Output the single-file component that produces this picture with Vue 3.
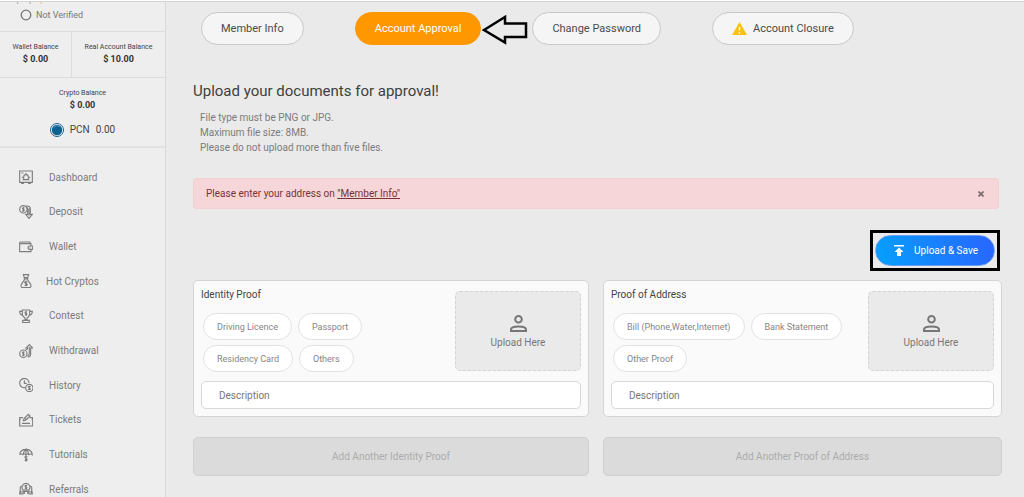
<script setup>
import { ref } from 'vue'

const menu = [
  { name: 'Dashboard', icon: 'dashboard' },
  { name: 'Deposit', icon: 'deposit' },
  { name: 'Wallet', icon: 'wallet' },
  { name: 'Hot Cryptos', icon: 'bag' },
  { name: 'Contest', icon: 'trophy' },
  { name: 'Withdrawal', icon: 'withdrawal' },
  { name: 'History', icon: 'history' },
  { name: 'Tickets', icon: 'tickets' },
  { name: 'Tutorials', icon: 'umbrella' },
  { name: 'Referrals', icon: 'referrals' },
]

const icons = {
  dashboard: [
    'M1 1.500H20V18.500H1ZM4 18.500V20.500H6.500V18.500M14.500 18.500V20.500H17V18.500M3.500 4.500H6.500M5.500 14.500H15.500M7 14.500V11Q7 7 10.500 7Q14 7 14 11V14.500M10.500 7V4.500M5 10V12M16 10V12',
  ],
  deposit: [
    'M6.500 1A5.500 5.500 0 1 0 6.500 12A5.500 5.500 0 1 0 6.500 1',
    'M8.500 4.500Q7 3.500 5.700 4.300T6.500 6.500T7.500 8.600T4.500 8.500M6.500 3V10',
    'M10.500 1.500Q17 1 17 6V14H20L15 20L10 14H13V7Q13 4 11.500 3M15 5V16',
  ],
  wallet: [
    'M1 4.500V17.500H18V14M18 9V5.500H3Q1 5.500 1 4.200T3 3H16.500V5.500M20.500 9H16Q13.500 9 13.500 11.500T16 14H20.500ZM16 11.500H17',
  ],
  bag: [
    'M6.500 1H14.500L13 5.500H8ZM7.500 7.500H13.500M8 5.500V9L3.500 15.500Q2 20.500 6 20.500H15Q19 20.500 17.500 15.500L13 9V5.500',
    'M12.500 12Q10.500 10.800 9 12T10.500 14.300T12 16.800T8.500 16.500M10.500 10V18.500',
  ],
  trophy: [
    'M5 1.500H16V8Q15 12.500 12 13.500V16H9V13.500Q6 12.500 5 8ZM5 3.500H1Q1 9 6 9.500M16 3.500H20Q20 9 15 9.500M5.500 20.500V17H15.500V20.500Z',
    'M12 4.500Q10 3.500 9.300 4.800T10.500 6.500T11.500 8.600T9 8.500M10.500 3V10',
  ],
  withdrawal: [
    'M6.500 9A5.500 5.500 0 1 0 6.500 20A5.500 5.500 0 1 0 6.500 9',
    'M8.500 12.500Q7 11.500 5.700 12.300T6.500 14.500T7.500 16.600T4.500 16.500M6.500 11V18',
    'M10 8.500Q13 8.500 13 6H10.500L15.500 1L20.500 6H17.500V15Q17.500 19.500 12.500 19.500M15.500 4V14Q15.500 17 13 17.500',
  ],
  history: [
    'M9 14.500A7 7 0 1 1 15 7.500M8 3.500V8H11.500',
    'M15.500 9.500A5.500 5.500 0 1 0 15.500 20.500A5.500 5.500 0 1 0 15.500 9.500',
    'M17.500 13Q16 12 14.700 12.800T15.500 15T16.500 17.200T13.500 17M15.500 11.500V18.500',
  ],
  tickets: [
    'M6 7H1V19.500H20.500V7H16M1 10H2.500M19 10H20.500M4.500 15.500H16.500M6 12L8 8L14 2L16.500 4.500L10.500 10.500L6 12M9 8L11 10',
  ],
  umbrella: [
    'M1 10Q2 2 10.500 2T20 10Q17 8 14.500 10Q12.500 8 10.500 10Q8.500 8 6 10Q3.500 8 1 10M6.500 10Q7 4 10.500 2Q14 4 14.500 10M10.500 0.500V11',
    'M12.500 13Q10.500 12 9.300 13T10.500 15.500T12 18.300T8.500 18M10.500 11V20.500',
  ],
  referrals: [
    'M10.500 2A6 6 0 0 1 15 12H6A6 6 0 0 1 10.500 2M5 6Q1 6 2 11L1 18H6V13M16 6Q20 6 19 11L20 18H15V13M6 18V14H15V18M3 13V17M18 13V17M8 14V18M13 14V18',
    'M12 5.500Q10 4.500 9.300 5.800T10.500 7.500T11.500 9.600T9 9.500M10.500 4V11',
  ],
}

const tabs = ['Member Info', 'Account Approval', 'Change Password', 'Account Closure']
const activeTab = ref('Account Approval')

const proofs = ref([
  {
    id: 'identity',
    title: 'Identity Proof',
    rows: [['Driving Licence', 'Passport'], ['Residency Card', 'Others']],
    description: '',
  },
  {
    id: 'address',
    title: 'Proof of Address',
    rows: [['Bill (Phone,Water,Internet)', 'Bank Statement'], ['Other Proof']],
    description: '',
  },
])
const alertOpen = ref(true)
</script>

<template>
  <div class="page">
    <aside class="sidebar">
      <div class="status">
        <svg class="remnant" viewBox="0 0 30 2" aria-hidden="true">
          <path d="M1 0L2 2M14 0V2" stroke="#a5a5a5" />
          <path d="M25 0V2" stroke="#f3bd7c" />
        </svg>
        <svg class="ring" viewBox="0 0 12 12" aria-hidden="true">
          <circle cx="6" cy="6" r="4.800" fill="none" stroke="#777" stroke-width="1.300" />
        </svg>
        <span>Not Verified</span>
      </div>
      <div class="balances">
        <div class="balance">
          <span>Wallet Balance</span>
          <strong>$ 0.00</strong>
        </div>
        <div class="balance">
          <span>Real Account Balance</span>
          <strong>$ 10.00</strong>
        </div>
      </div>
      <div class="crypto">
        <div class="balance">
          <span>Crypto Balance</span>
          <strong>$ 0.00</strong>
        </div>
        <div class="coin">
          <svg viewBox="0 0 14 14" aria-hidden="true">
            <circle cx="7" cy="7" r="6.500" fill="#f2f6f8" stroke="#1d628c" />
            <circle cx="7" cy="7" r="5.200" fill="#0d608f" />
            <path d="M4 4.500A4 4 0 0 1 9.500 3.700" fill="none" stroke="#4d91b4" />
          </svg>
          <span>PCN</span>
          <span>0.00</span>
        </div>
      </div>
      <nav class="menu">
        <a v-for="item in menu" :key="item.name" href="#" :class="item.icon">
          <svg viewBox="0 0 21 21" aria-hidden="true">
            <path v-for="d in icons[item.icon]" :key="d" :d="d" />
          </svg>
          <span>{{ item.name }}</span>
        </a>
      </nav>
    </aside>

    <main class="content">
      <nav class="tabs">
        <div v-for="tab in tabs" :key="tab" class="tab-slot">
          <button type="button" class="tab" :class="{ active: tab === activeTab }" @click="activeTab = tab">
            <svg v-if="tab === 'Account Closure'" class="warning" viewBox="0 0 15 13" aria-hidden="true">
              <path d="M7.500 0L15 13H0Z" fill="#ffc012" />
              <path d="M7.500 5V8.500M7.500 10V11.500" stroke="#fff" stroke-width="1.400" />
            </svg>
            {{ tab }}
          </button>
          <svg v-if="tab === 'Account Approval'" class="pointer" viewBox="0 0 46 30" aria-hidden="true">
            <path d="M2 15L23 2V8.500H44V22H23V27.500Z" fill="none" stroke="#000" stroke-width="2.500" />
          </svg>
        </div>
      </nav>

      <h1>Upload your documents for approval!</h1>
      <div class="notes">
        <p>File type must be PNG or JPG.</p>
        <p>Maximum file size: 8MB.</p>
        <p>Please do not upload more than five files.</p>
      </div>

      <div v-if="alertOpen" class="alert" role="alert">
        <span>Please enter your address on <a href="#">"Member Info"</a></span>
        <button type="button" aria-label="Close" @click="alertOpen = false">
          <svg viewBox="0 0 6 6" aria-hidden="true"><path d="M0.500 0.500L5.500 5.500M5.500 0.500L0.500 5.500" /></svg>
        </button>
      </div>

      <div class="actions">
        <div class="highlight">
          <button type="button" class="save">
            <svg viewBox="0 0 10 11" aria-hidden="true">
              <path d="M0 0H10V1.500H0ZM5 2.500L9.500 7H7V11H3V7H0.500Z" fill="#fff" />
            </svg>
            Upload &amp; Save
          </button>
        </div>
      </div>

      <div class="proofs">
        <section v-for="proof in proofs" :key="proof.id" class="card">
          <div class="card-top">
            <div class="types">
              <h2>{{ proof.title }}</h2>
              <div v-for="(row, i) in proof.rows" :key="i" class="chips">
                <button v-for="type in row" :key="type" type="button">{{ type }}</button>
              </div>
            </div>
            <button type="button" class="drop">
              <svg viewBox="0 0 17 17" aria-hidden="true">
                <circle cx="8.500" cy="4.300" r="3.300" />
                <path d="M1 16V14.500Q1 11.500 8.500 11.500T16 14.500V16Z" />
              </svg>
              Upload Here
            </button>
          </div>
          <input v-model="proof.description" type="text" placeholder="Description" :aria-label="proof.title + ' description'" />
        </section>
        <button v-for="proof in proofs" :key="proof.id + '-add'" type="button" class="add" disabled>
          Add Another {{ proof.title }}
        </button>
      </div>
    </main>
  </div>
</template>

<style>
body {
  background: #eaeaea;
  overflow: hidden;
}
</style>

<style scoped>
.page {
  display: flex;
  height: 100vh;
  overflow: hidden;
  box-sizing: border-box;
  border-top: 1px solid #fff;
  background: #eaeaea;
  color: #444;
  font-family: Roboto, "Liberation Sans", sans-serif;
  font-size: 10px;
}
.page * {
  box-sizing: border-box;
}
h1,
h2,
p {
  margin: 0;
  font-weight: 400;
}
button,
input {
  font: inherit;
  margin: 0;
}
button {
  display: flex;
  align-items: center;
  justify-content: center;
  cursor: pointer;
}

.sidebar {
  flex: none;
  width: 166px;
  border-top: 1px solid #d2d4d4;
  border-right: 1px solid #d9d9d9;
  background: #eee;
}
.status {
  position: relative;
  display: flex;
  align-items: center;
  gap: 4px;
  height: 30px;
  padding: 0 0 4px 20px;
  border-bottom: 1px solid #dcdcdc;
  color: #777;
  font-size: 9px;
}
.remnant {
  position: absolute;
  top: 0;
  left: 16px;
  width: 30px;
  height: 2px;
}
.ring {
  width: 12px;
  height: 12px;
}
.balances {
  display: grid;
  grid-template-columns: 72px 1fr;
  border-bottom: 1px solid #dcdcdc;
}
.balances .balance {
  padding: 9px 0 12px;
}
.balances .balance:first-child {
  border-right: 1px solid #dcdcdc;
}
.balance {
  display: flex;
  flex-direction: column;
  align-items: center;
  line-height: 12px;
  font-size: 7px;
}
.balance strong {
  font-size: 9px;
  font-weight: 700;
  color: #333;
}
.crypto {
  padding: 9px 0 8px;
  border-bottom: 2px solid #e2e2e2;
}
.coin {
  display: flex;
  align-items: center;
  justify-content: center;
  gap: 6px;
  margin-top: 11px;
  line-height: 16px;
}
.coin svg {
  width: 14px;
  height: 14px;
}
.menu {
  padding-top: 12px;
}
.menu a {
  display: flex;
  align-items: center;
  gap: 16px;
  height: 35px;
  padding-left: 19px;
  color: #7b7b7b;
  text-decoration: none;
}
.menu a:nth-child(3n + 1) {
  height: 34px;
}
.menu a.bag {
  gap: 13px;
}
.menu svg {
  width: 14px;
  height: 14px;
  fill: none;
  stroke: #7d7d7d;
  stroke-width: 1.7;
}

.content {
  flex: 1;
  min-width: 0;
  padding: 9px 22px 0 27px;
  border-top: 1px solid #d2d4d4;
}
.tabs {
  display: flex;
  align-items: center;
  gap: 51px;
  height: 34px;
  padding-left: 8px;
}
.tab-slot {
  position: relative;
}
.tab {
  gap: 6px;
  height: 33px;
  padding: 0 19px;
  border: 1px solid #c8c8c8;
  border-radius: 17px;
  background: #f5f5f5;
  color: #4a4a4a;
  font-size: 11px;
  white-space: nowrap;
}
.tab.active {
  border-color: #ff9800;
  background: #ff9800;
  color: #fff;
}
.warning {
  width: 15px;
  height: 13px;
}
.pointer {
  position: absolute;
  top: 3px;
  left: 100%;
  width: 46px;
  height: 30px;
  margin-left: 1px;
}
h1 {
  margin-top: 36px;
  color: #3f3f3f;
  font-size: 15px;
  line-height: 20px;
}
.notes {
  margin-top: 9px;
  padding-left: 7px;
  color: #7c7c7c;
  line-height: 15px;
}
.alert {
  display: flex;
  align-items: center;
  justify-content: space-between;
  height: 31px;
  margin: 23px 3px 0 0;
  padding: 0 12px;
  border: 1px solid #f4cfd3;
  border-radius: 3px;
  background: #f6d6d9;
  color: #7d3038;
}
.alert a {
  color: inherit;
}
.alert button {
  padding: 2px;
  border: 0;
  background: none;
}
.alert svg {
  width: 6px;
  height: 6px;
  stroke: #77696a;
  stroke-width: 1.6;
}
.actions {
  display: flex;
  justify-content: flex-end;
  margin: 21px 2px 0 0;
}
.highlight {
  padding: 2px;
  border: 3px solid #000;
}
.save {
  gap: 10px;
  height: 31px;
  padding: 0 16px 0 18px;
  border: 1px solid #6a9df5;
  border-radius: 16px;
  background: linear-gradient(75deg, #05a0fb, #2a65ff);
  color: #fff;
}
.save svg {
  width: 10px;
  height: 11px;
}

.proofs {
  display: grid;
  grid-template-columns: 396fr 399fr;
  gap: 20px 14px;
  margin-top: 9px;
}
.card {
  padding: 10px 7px 7px;
  border: 1px solid #d5d5d5;
  border-radius: 5px;
  background: #fafafa;
}
.card-top {
  display: flex;
  align-items: flex-start;
  justify-content: space-between;
}
h2 {
  margin-bottom: 14px;
  font-size: 10px;
  line-height: 8px;
}
.chips {
  display: flex;
  gap: 6px;
  margin-left: 2px;
}
.chips + .chips {
  margin-top: 5px;
}
.chips button {
  height: 27px;
  padding: 0 13px;
  border: 1px solid #e2e2e2;
  border-radius: 14px;
  background: #fff;
  color: #858585;
  font-size: 9px;
  white-space: nowrap;
}
.drop {
  flex: none;
  flex-direction: column;
  gap: 5px;
  width: 126px;
  height: 80px;
  padding: 0;
  border: 1px dashed #d2d2d2;
  border-radius: 5px;
  background: #eaeaea;
  color: #777;
}
.drop svg {
  width: 17px;
  height: 17px;
  fill: none;
  stroke: #777;
  stroke-width: 2;
}
.card input {
  display: block;
  width: 100%;
  height: 28px;
  margin-top: 9px;
  padding: 0 17px;
  border: 1px solid #d8d8d8;
  border-radius: 5px;
  background: #fff;
  color: #777;
}
.card input::placeholder {
  color: #777;
  opacity: 1;
}
.add {
  height: 39px;
  border: 1px solid #d0d0d0;
  border-radius: 5px;
  background: #dbdbdb;
  color: #ababab;
}
</style>
